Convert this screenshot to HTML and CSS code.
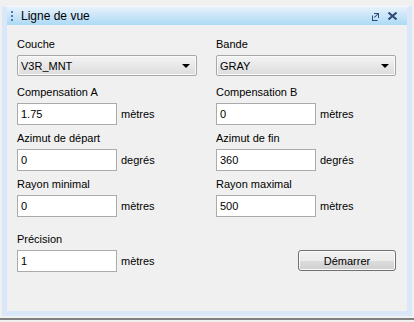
FILE: index.html
```html
<!DOCTYPE html>
<html>
<head>
<meta charset="utf-8">
<link rel="stylesheet" href="styles.css">
</head>
<body>
<div class="window">
  <div class="titlebar">
    <span class="grip"><i></i><i></i><i></i></span>
    <span class="title">Ligne de vue</span>
    <span class="tools">
      <svg class="restore" width="9" height="9" viewBox="0 0 9 9"><path d="M1 3.5h1v4.5h4.5v1H1z M3 1h5v5h-1V2.5L3.7 5.8 3 5.1 6.3 2H3z" fill="#2d4a78"/></svg>
      <svg class="close" width="9" height="8" viewBox="0 0 9 8"><path d="M0.5 0.5L8.5 7.5M8.5 0.5L0.5 7.5" stroke="#2d4a78" stroke-width="2" fill="none"/></svg>
    </span>
  </div>
  <div class="content">
    <div class="field first">
      <label>Couche</label>
      <div class="combo"><span>V3R_MNT</span><b class="arrow"></b></div>
    </div>
    <div class="field first">
      <label>Bande</label>
      <div class="combo"><span>GRAY</span><b class="arrow"></b></div>
    </div>
    <div class="field">
      <label>Compensation A</label>
      <div class="row"><div class="input">1.75</div><span class="unit">mètres</span></div>
    </div>
    <div class="field">
      <label>Compensation B</label>
      <div class="row"><div class="input">0</div><span class="unit">mètres</span></div>
    </div>
    <div class="field">
      <label>Azimut de départ</label>
      <div class="row"><div class="input">0</div><span class="unit">degrés</span></div>
    </div>
    <div class="field">
      <label>Azimut de fin</label>
      <div class="row"><div class="input">360</div><span class="unit">degrés</span></div>
    </div>
    <div class="field">
      <label>Rayon minimal</label>
      <div class="row"><div class="input">0</div><span class="unit">mètres</span></div>
    </div>
    <div class="field">
      <label>Rayon maximal</label>
      <div class="row"><div class="input">500</div><span class="unit">mètres</span></div>
    </div>
    <div class="field last">
      <label>Précision</label>
      <div class="row"><div class="input">1</div><span class="unit">mètres</span></div>
    </div>
    <div class="field last end">
      <button class="btn">Démarrer</button>
    </div>
  </div>
</div>
<div class="taskbar"></div>
</body>
</html>
```
FILE: styles.css
```css
html, body {
  margin: 0;
  padding: 0;
}
body {
  width: 414px;
  height: 322px;
  background: #f0f0f0;
  font-family: "Liberation Sans", Arial, sans-serif;
  font-size: 11px;
  color: #000;
  overflow: hidden;
}
.window {
  margin: 6px 2px 0 2px;
  height: 304px;
  border: 5px solid #d9e7f8;
  border-top: 1px solid #f4f9fe;
  background: #f0f0f0;
}
.titlebar {
  height: 18px;
  background: linear-gradient(#e6f2fc, #cde6f8 45%, #acdaf6);
  display: flex;
  align-items: center;
}
.grip {
  display: flex;
  flex-direction: column;
  gap: 2px;
  margin-left: 4px;
  width: 2px;
}
.grip i {
  display: block;
  width: 2px;
  height: 2px;
  background: #4a7ab8;
}
.title {
  margin-left: 8px;
  font-size: 12px;
  color: #000;
}
.tools {
  margin-left: auto;
  display: flex;
  align-items: center;
  gap: 8px;
  margin-right: 10px;
}
.content {
  display: grid;
  grid-template-columns: 180px 180px;
  column-gap: 19px;
  padding: 13px 0 0 10px;
}
.field {
  display: flex;
  flex-direction: column;
  height: 46px;
}
.field.first {
  height: 48px;
}
.field.last {
  margin-top: 9px;
}
label {
  height: 13px;
  line-height: 13px;
  margin-bottom: 4px;
  display: block;
}
.combo {
  height: 19px;
  border: 1px solid #a7a7a7;
  border-radius: 2px;
  background: linear-gradient(#f4f4f4, #e8e8e8 50%, #dcdcdc);
  display: flex;
  align-items: center;
  padding-left: 3px;
  box-shadow: inset 0 0 0 1px #fafafa;
}
.arrow {
  margin-left: auto;
  margin-right: 6px;
  width: 0;
  height: 0;
  border-left: 4px solid transparent;
  border-right: 4px solid transparent;
  border-top: 4px solid #000;
}
.row {
  display: flex;
  align-items: center;
}
.input {
  width: 95px;
  height: 20px;
  line-height: 20px;
  border: 1px solid #ababab;
  background: #fff;
  padding-left: 3px;
}
.unit {
  margin-left: 4px;
}
.end {
  justify-content: flex-start;
  align-items: flex-end;
  padding-top: 17px;
}
.btn {
  width: 98px;
  height: 21px;
  border: 1px solid #707070;
  border-radius: 3px;
  background: linear-gradient(#f2f2f2, #ebebeb 50%, #dddddd 51%, #cfcfcf);
  font-family: "Liberation Sans", Arial, sans-serif;
  font-size: 11px;
  color: #000;
  padding: 0;
  box-shadow: inset 0 0 0 1px #fbfbfb;
}
.taskbar {
  margin-top: 2px;
  height: 2px;
  background: #808080;
}
```
